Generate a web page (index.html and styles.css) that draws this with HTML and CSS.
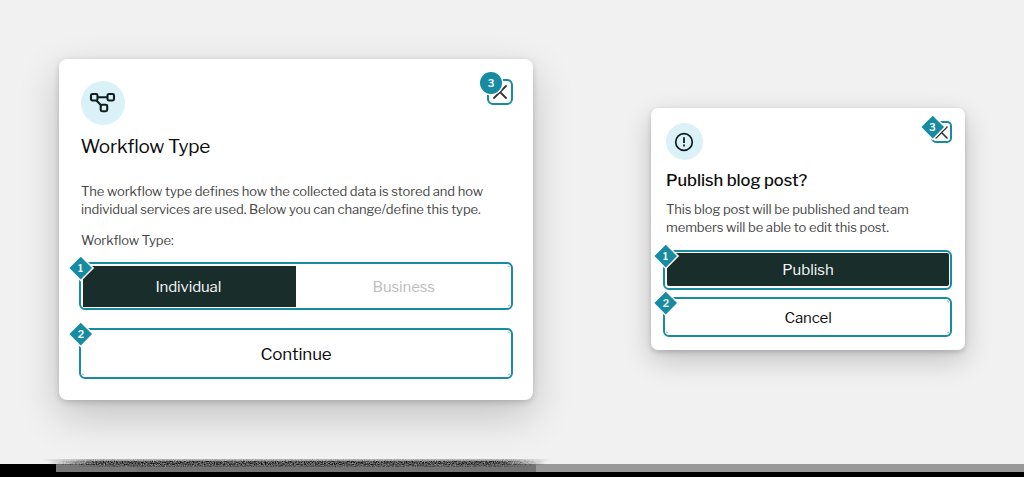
FILE: index.html
```
<!DOCTYPE html>
<html lang="en">
<head>
<meta charset="utf-8">
<title>Dialogs</title>
<link rel="stylesheet" href="styles.css">
</head>
<body>
<main class="stage">
  <section class="dialog workflow">
    <header class="top">
      <span class="emblem">
        <svg width="28" height="22" viewBox="0 0 28 22" fill="none" stroke="#101e20" stroke-width="2.1"><rect x="2" y="2" width="6.5" height="6.5" rx="1.4"/><rect x="18.5" y="2" width="6.5" height="6.5" rx="1.4"/><rect x="11.7" y="12.7" width="6.5" height="6.5" rx="1.4"/><path d="M8.5 5.2H18.5M7.5 8.5l4.8 5"/></svg>
      </span>
      <button class="close" aria-label="Close">
        <svg width="14" height="14" viewBox="0 0 14 14" stroke="#343233" stroke-width="1.8" stroke-linecap="round"><path d="M1 1l12 12M13 1L1 13"/></svg>
        <span class="badge round"><b>3</b></span>
      </button>
    </header>
    <h1 class="title">Workflow Type</h1>
    <p class="copy">The workflow type defines how the collected data is stored and how<br>individual services are used. Below you can change/define this type.</p>
    <p class="label">Workflow Type:</p>
    <div class="field segmented">
      <span class="segment active">Individual</span>
      <span class="segment">Business</span>
      <span class="badge diamond"><b>1</b></span>
      <i class="tick tr"></i><i class="tick br"></i>
    </div>
    <div class="field action">
      <span>Continue</span>
      <span class="badge diamond"><b>2</b></span>
      <i class="tick tr"></i><i class="tick br"></i><i class="tick bl"></i>
    </div>
  </section>

  <section class="dialog publish">
    <header class="top">
      <span class="emblem">
        <svg width="20" height="20" viewBox="0 0 20 20" fill="none" stroke="#101e20"><circle cx="10" cy="10" r="8.3" stroke-width="1.7"/><path d="M10 5.3v5.8M10 12.6v1.8" stroke-width="1.8"/></svg>
      </span>
      <button class="close" aria-label="Close">
        <svg width="13" height="13" viewBox="0 0 13 13" stroke="#343233" stroke-width="1.6" stroke-linecap="round"><path d="M1 1l11 11M12 1L1 12"/></svg>
        <span class="badge diamond"><b>3</b></span>
      </button>
    </header>
    <h1 class="title">Publish blog post?</h1>
    <p class="copy">This blog post will be published and team<br>members will be able to edit this post.</p>
    <div class="field primary">
      <span class="fill">Publish</span>
      <span class="badge diamond"><b>1</b></span>
    </div>
    <div class="field secondary">
      <span>Cancel</span>
      <span class="badge diamond"><b>2</b></span>
      <i class="tick tr"></i><i class="tick br"></i><i class="tick bl"></i>
    </div>
  </section>
</main>
<footer class="strip">
  <svg class="grain" width="512" height="9" viewBox="0 0 512 9">
    <defs>
      <filter id="grain" x="0" y="0" width="1" height="1" color-interpolation-filters="sRGB"><feTurbulence type="fractalNoise" baseFrequency="0.9" numOctaves="2" seed="4"/><feColorMatrix values="0.9 0 0 0 -0.14  0.9 0 0 0 -0.14  0.9 0 0 0 -0.14  0 0 0 0 1"/><feComposite in2="SourceGraphic" operator="in"/></filter>
      <linearGradient id="fade"><stop offset="0" stop-color="#fff" stop-opacity="0"/><stop offset=".1" stop-color="#fff"/><stop offset=".91" stop-color="#fff"/><stop offset="1" stop-color="#fff" stop-opacity="0"/></linearGradient>
    </defs>
    <rect y="0" width="512" height="1" fill="url(#fade)" opacity=".4" filter="url(#grain)"/>
    <rect y="1" width="512" height="1" fill="url(#fade)" opacity=".5" filter="url(#grain)"/>
    <rect x="8" y="2" width="498" height="4" fill="url(#fade)" filter="url(#grain)"/>
    <rect x="30" y="6" width="464" height="2" fill="url(#fade)" opacity=".6" filter="url(#grain)"/>
  </svg>
</footer>
</body>
</html>
```

FILE: styles.css
```
* { box-sizing: border-box; }
body {
  margin: 0;
  width: 1024px;
  height: 477px;
  overflow: hidden;
  display: flex;
  flex-direction: column;
  background: #f1f1f1;
  color: #0c0c0c;
  font-family: "Libre Franklin", Inter, sans-serif;
}
.stage {
  display: flex;
  align-items: flex-start;
  gap: 118px;
  height: 464px;
  padding-left: 59px;
  overflow: hidden;
}
.dialog {
  display: flex;
  flex-direction: column;
  background: #fff;
  white-space: nowrap;
}
.workflow {
  width: 474px;
  height: 341px;
  margin-top: 59px;
  padding: 20px 20px 0 20px;
  border-radius: 8px;
  box-shadow: 0 2px 6px rgba(0,0,0,.18), 0 15px 42px rgba(0,0,0,.2);
}
.publish {
  width: 314px;
  height: 242px;
  margin-top: 108px;
  padding: 13px 13px 0 12px;
  border-radius: 7px;
  box-shadow: 0 2px 5px rgba(0,0,0,.18), 0 10px 28px rgba(0,0,0,.2);
}
.top { display: flex; justify-content: space-between; align-items: flex-start; }
.emblem {
  display: flex;
  align-items: center;
  justify-content: center;
  border-radius: 50%;
  background: #daf1f7;
}
.workflow .emblem { width: 44px; height: 44px; margin: 2px 0 0 2px; }
.publish .emblem { width: 37px; height: 37px; margin: 2px 0 0 2.5px; }
.close {
  position: relative;
  display: flex;
  align-items: center;
  justify-content: center;
  padding: 0;
  border: 2px solid #168ba2;
  background: #fff;
  font-family: inherit;
}
.workflow .close { width: 26px; height: 26px; border-radius: 6px; }
.publish .close { width: 21px; height: 22px; border-radius: 5px; }
.title, .copy, .label { margin: 0 0 0 2px; }
.title { font-weight: 400; line-height: 24px; }
.workflow .title { margin: 10px 0 0 1.5px; font-size: 19px; letter-spacing: -.28px; }
.publish .title { margin: 8px 0 0 3px; font-size: 16.5px; font-weight: 500; letter-spacing: -.04px; }
.copy, .label { color: #454545; font-size: 13px; line-height: 18.5px; font-weight: 400; letter-spacing: -.09px; }
.workflow .copy { margin-top: 22.5px; }
.publish .copy { margin: 7.5px 0 0 3px; }
.label { margin-top: 12px; }
.field {
  position: relative;
  display: flex;
  align-items: center;
  justify-content: center;
  border: 2px solid #168ba2;
  border-radius: 6px;
  letter-spacing: -.12px;
  flex: none;
}
.segmented { height: 48px; margin-top: 13px; padding: 1.5px; font-size: 15px; color: #bdbdbd; }
.segment { flex: 1; height: 100%; padding-top: 1px; display: flex; align-items: center; justify-content: center; }
.segment + .segment { padding-left: 2px; }
.active, .fill { background: #192d2b; color: #f5f8f8; }
.active { padding-right: 2px; }
.action { height: 51px; margin-top: 18px; font-size: 17px; }
.primary { height: 40px; margin-top: 13px; padding: 1.5px; font-size: 15px; letter-spacing: 0; }
.fill { flex: 1; height: 100%; padding-left: 1px; display: flex; align-items: center; justify-content: center; border-radius: 2px; }
.secondary { height: 40px; margin-top: 7px; padding: 2px 0 0 1px; font-size: 15px; }
.badge {
  position: absolute;
  display: flex;
  align-items: center;
  justify-content: center;
  background: #168ba2;
  color: #fff;
  font-size: 10px;
  line-height: 1;
  letter-spacing: 0;
  box-shadow: 0 0 0 1.5px #fff;
}
.badge b { font-weight: 600; }
.diamond { width: 15.5px; height: 15.5px; left: -8px; top: -4px; transform: rotate(45deg); }
.publish .field .diamond { left: -7px; }
.diamond b { transform: rotate(-45deg); }
.round { width: 22px; height: 22px; left: -9px; top: -9.5px; border-radius: 50%; }
.publish .close .diamond { left: -8.5px; top: -4px; }
.tick { position: absolute; width: 2px; height: 1px; background: #a9a9a9; transform: rotate(45deg); }
.tr { right: 1px; top: 2px; }
.br { right: 1px; bottom: 2px; transform: rotate(-45deg); }
.bl { left: 1px; bottom: 2px; }
.strip {
  position: relative;
  flex: none;
  height: 13px;
  background: linear-gradient(90deg, #777 0 80px, #737373 80px 480px, #999 480px) 56px 0 / 968px 8px no-repeat #000;
}
.grain { position: absolute; left: 40px; top: -5px; }
```
